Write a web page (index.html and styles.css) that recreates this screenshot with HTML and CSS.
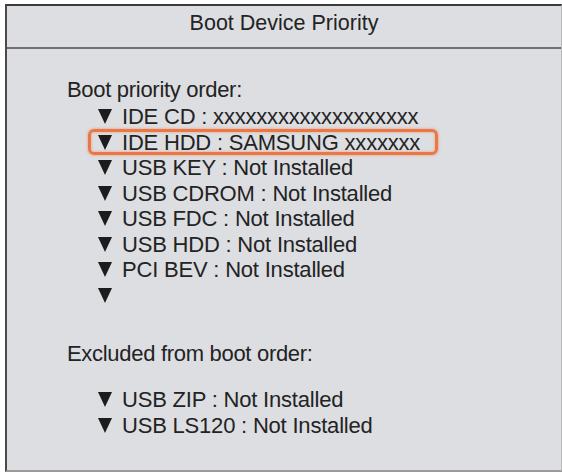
FILE: index.html
```html
<!DOCTYPE html>
<html>
<head>
<meta charset="utf-8">
<link rel="stylesheet" href="styles.css">
</head>
<body>
<div class="panel">
  <div class="header">Boot Device Priority</div>
  <div class="content">
    <div class="group-title">Boot priority order:</div>
    <ul class="list">
      <li class="item"><svg class="tri" viewBox="0 0 14 15"><polygon points="0,0 14,0 7,15"/></svg><span>IDE CD : xxxxxxxxxxxxxxxxxxx</span></li>
      <li class="item"><span class="hl"><svg class="tri" viewBox="0 0 14 15"><polygon points="0,0 14,0 7,15"/></svg><span>IDE HDD : SAMSUNG xxxxxxx</span></span></li>
      <li class="item"><svg class="tri" viewBox="0 0 14 15"><polygon points="0,0 14,0 7,15"/></svg><span>USB KEY : Not Installed</span></li>
      <li class="item"><svg class="tri" viewBox="0 0 14 15"><polygon points="0,0 14,0 7,15"/></svg><span>USB CDROM : Not Installed</span></li>
      <li class="item"><svg class="tri" viewBox="0 0 14 15"><polygon points="0,0 14,0 7,15"/></svg><span>USB FDC : Not Installed</span></li>
      <li class="item"><svg class="tri" viewBox="0 0 14 15"><polygon points="0,0 14,0 7,15"/></svg><span>USB HDD : Not Installed</span></li>
      <li class="item"><svg class="tri" viewBox="0 0 14 15"><polygon points="0,0 14,0 7,15"/></svg><span>PCI BEV : Not Installed</span></li>
      <li class="item"><svg class="tri" viewBox="0 0 14 15"><polygon points="0,0 14,0 7,15"/></svg></li>
    </ul>
    <div class="group-title excluded">Excluded from boot order:</div>
    <ul class="list list-excluded">
      <li class="item"><svg class="tri" viewBox="0 0 14 15"><polygon points="0,0 14,0 7,15"/></svg><span>USB ZIP : Not Installed</span></li>
      <li class="item"><svg class="tri" viewBox="0 0 14 15"><polygon points="0,0 14,0 7,15"/></svg><span>USB LS120 : Not Installed</span></li>
    </ul>
  </div>
</div>
</body>
</html>
```
FILE: styles.css
```css
html, body {
  margin: 0;
  padding: 0;
  background: #ffffff;
}
body {
  font-family: "Liberation Sans", Arial, sans-serif;
  color: #232323;
}
.panel {
  box-sizing: border-box;
  margin: 4px 0 0 5px;
  width: 557px;
  height: 468px;
  background: #dcdee2;
  border-top: 2px solid #3a3a3a;
  border-left: 2px solid #4a4a4a;
  border-right: 1px solid #b8b8b8;
  border-bottom: 2px solid #9a9a9a;
}
.header {
  box-sizing: border-box;
  height: 43px;
  border-bottom: 2px solid #707070;
  text-align: center;
  font-size: 21.5px;
  line-height: 24px;
  padding-top: 5px;
}
.content {
  padding: 28px 0 0 60px;
  font-size: 22px;
  line-height: 25.5px;
}
.group-title {
  letter-spacing: -0.3px;
  margin-bottom: 1.5px;
}
.excluded {
  margin-top: 33px;
  margin-bottom: 0;
}
.list {
  list-style: none;
  margin: 0;
  padding: 0 0 0 31px;
}
.list-excluded {
  margin-top: 20.5px;
}
.item {
  display: flex;
  align-items: center;
  height: 25.5px;
  white-space: nowrap;
  letter-spacing: -0.2px;
}
.tri {
  width: 14px;
  height: 15px;
  flex: none;
  margin-right: 10px;
  fill: #1c1c1c;
}
.hl {
  display: flex;
  align-items: center;
  height: 20px;
  margin-left: -10px;
  padding: 0 15px 0 7px;
  border: 3px solid #e8784a;
  border-radius: 6px;
  box-shadow: 0 0 2px 1px rgba(240, 160, 120, 0.6), inset 0 0 2px 1px rgba(240, 170, 130, 0.6);
}
```
